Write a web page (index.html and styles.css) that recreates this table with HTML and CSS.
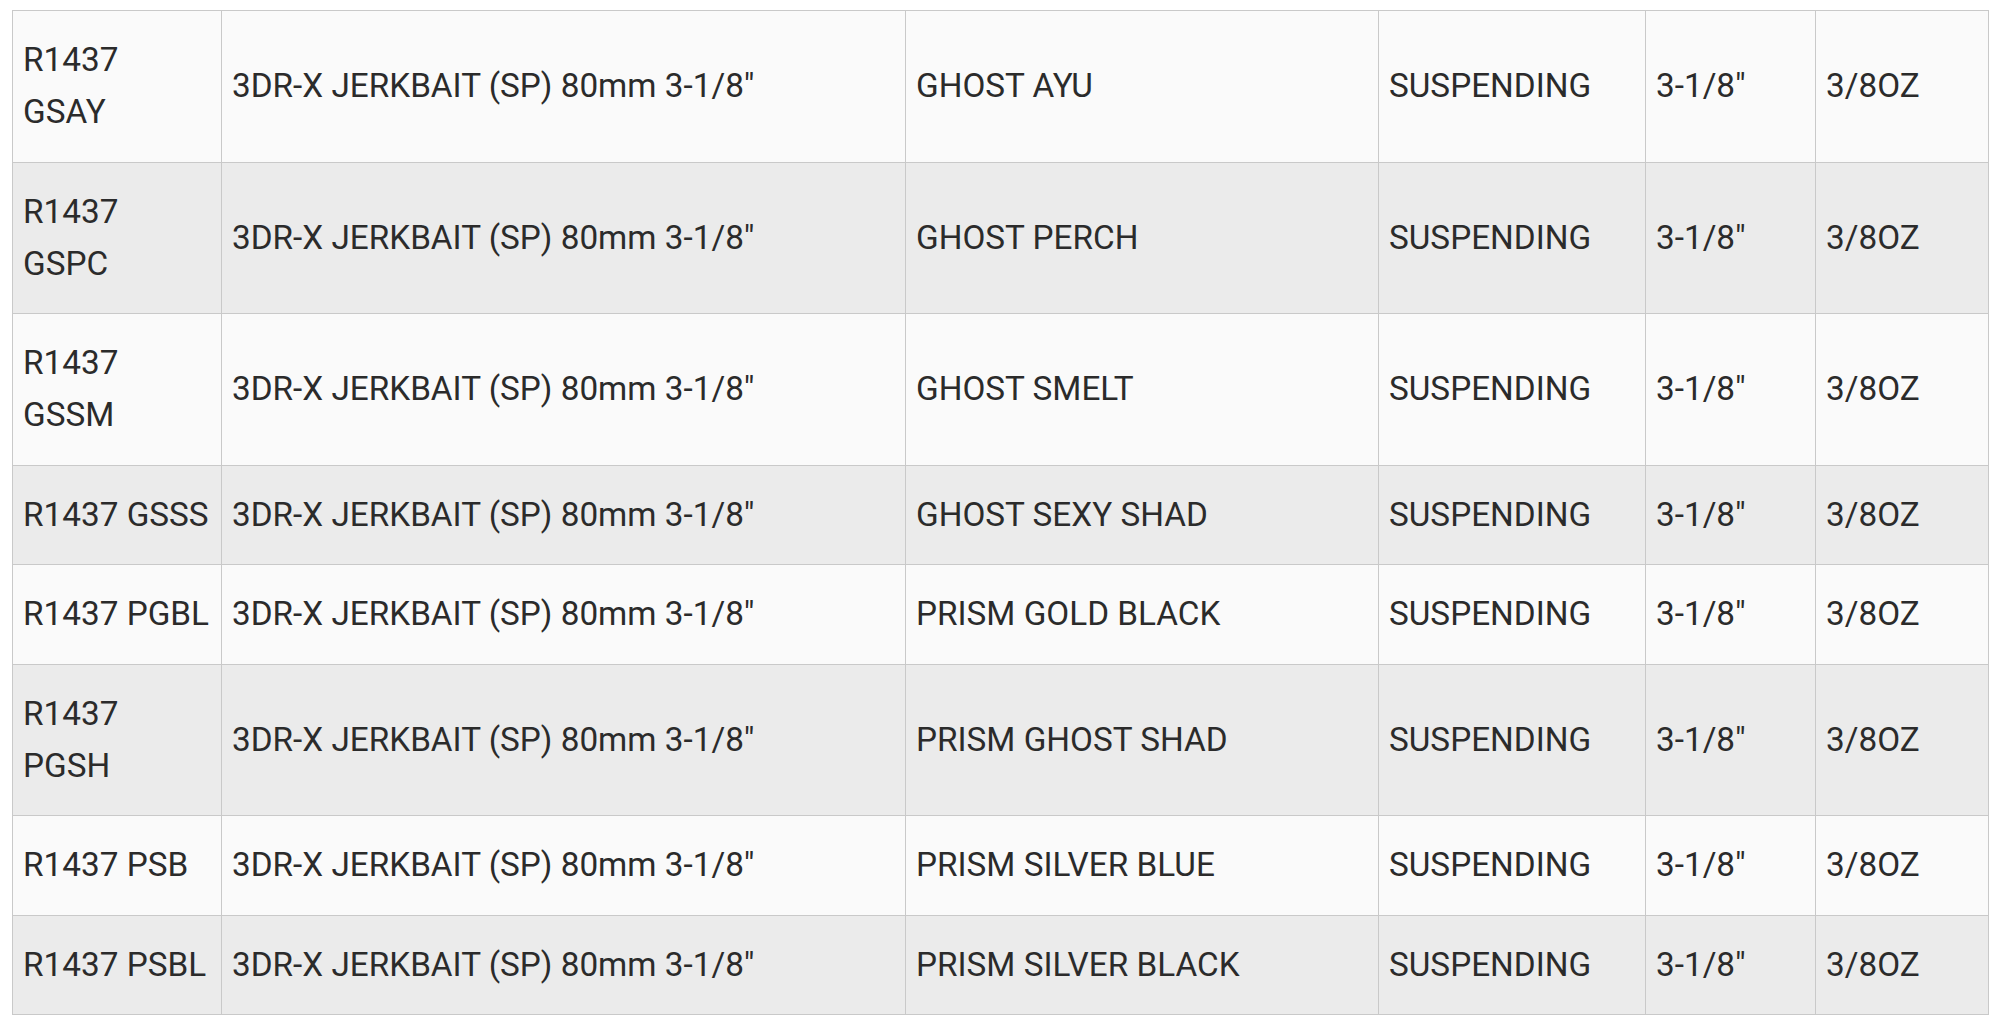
FILE: index.html
```html
<!DOCTYPE html>
<html>
<head>
<meta charset="utf-8">
<link rel="stylesheet" href="styles.css">
</head>
<body>
<div class="wrap">
<table class="specs">
  <colgroup>
    <col class="c-code"><col class="c-name"><col class="c-color"><col class="c-type"><col class="c-len"><col class="c-wt">
  </colgroup>
  <tbody>
    <tr><td>R1437<br>GSAY</td><td>3DR-X JERKBAIT (SP) 80mm 3-1/8"</td><td>GHOST AYU</td><td>SUSPENDING</td><td>3-1/8"</td><td>3/8OZ</td></tr>
    <tr><td>R1437<br>GSPC</td><td>3DR-X JERKBAIT (SP) 80mm 3-1/8"</td><td>GHOST PERCH</td><td>SUSPENDING</td><td>3-1/8"</td><td>3/8OZ</td></tr>
    <tr><td>R1437<br>GSSM</td><td>3DR-X JERKBAIT (SP) 80mm 3-1/8"</td><td>GHOST SMELT</td><td>SUSPENDING</td><td>3-1/8"</td><td>3/8OZ</td></tr>
    <tr><td>R1437 GSSS</td><td>3DR-X JERKBAIT (SP) 80mm 3-1/8"</td><td>GHOST SEXY SHAD</td><td>SUSPENDING</td><td>3-1/8"</td><td>3/8OZ</td></tr>
    <tr><td>R1437 PGBL</td><td>3DR-X JERKBAIT (SP) 80mm 3-1/8"</td><td>PRISM GOLD BLACK</td><td>SUSPENDING</td><td>3-1/8"</td><td>3/8OZ</td></tr>
    <tr><td>R1437<br>PGSH</td><td>3DR-X JERKBAIT (SP) 80mm 3-1/8"</td><td>PRISM GHOST SHAD</td><td>SUSPENDING</td><td>3-1/8"</td><td>3/8OZ</td></tr>
    <tr><td>R1437 PSB</td><td>3DR-X JERKBAIT (SP) 80mm 3-1/8"</td><td>PRISM SILVER BLUE</td><td>SUSPENDING</td><td>3-1/8"</td><td>3/8OZ</td></tr>
    <tr><td>R1437 PSBL</td><td>3DR-X JERKBAIT (SP) 80mm 3-1/8"</td><td>PRISM SILVER BLACK</td><td>SUSPENDING</td><td>3-1/8"</td><td>3/8OZ</td></tr>
  </tbody>
</table>
</div>
</body>
</html>
```
FILE: styles.css
```css
html, body {
  margin: 0;
  padding: 0;
  background: #ffffff;
}
.wrap {
  padding: 10px 12px 0 12px;
}
.specs {
  border-collapse: collapse;
  table-layout: fixed;
  width: 1976px;
  font-family: Roboto, "Liberation Sans", sans-serif;
  font-size: 33.3px;
  line-height: 52px;
  color: #2b2b2b;
}
.c-code { width: 209px; }
.c-name { width: 684px; }
.c-color { width: 473px; }
.c-type { width: 267px; }
.c-len { width: 170px; }
.c-wt { width: 173px; }
.specs td {
  border: 1px solid #c9c9c9;
  padding: 23.25px 4px 23.25px 10px;
  vertical-align: middle;
  white-space: nowrap;
}
.specs tr:nth-child(odd) td {
  background: #fafafa;
}
.specs tr:nth-child(even) td {
  background: #ebebeb;
}
```
